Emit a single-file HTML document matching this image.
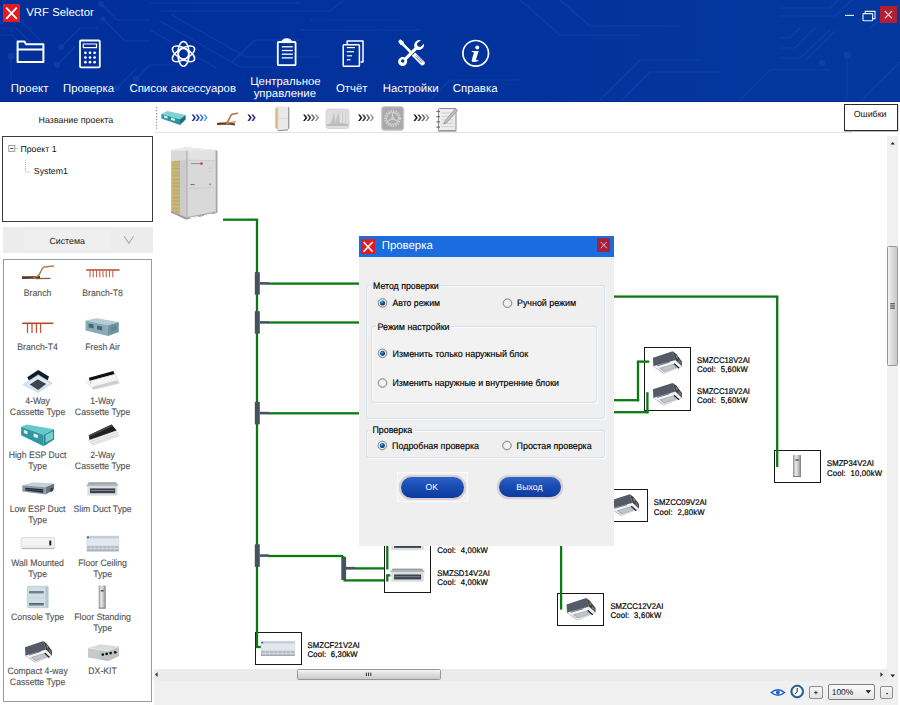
<!DOCTYPE html>
<html><head><meta charset="utf-8">
<style>
*{box-sizing:border-box;margin:0;padding:0}
html,body{width:900px;height:705px;overflow:hidden;background:#fff;font-family:"Liberation Sans",sans-serif;}
.a{position:absolute}
.t{position:absolute;white-space:nowrap;text-rendering:geometricPrecision;font-family:"Liberation Sans",sans-serif}
.g{position:absolute;background:#0b7a15}
.j{position:absolute;background:#47525f}
.bx{position:absolute;border:1px solid #1a1a1a;background:#fff}
.gb{position:absolute;border:1px solid #d8e1e8;border-radius:3px;box-shadow:inset 1px 1px 0 #fafafa,1px 1px 0 #fafafa}
svg{position:absolute;overflow:visible}
</style></head><body>
<div class="a" style="left:0;top:0;width:900px;height:102px;background:linear-gradient(90deg,#022f9a 0%,#02329c 45%,#04389f 100%);overflow:hidden">
<svg style="left:0;top:0" width="900" height="102" fill="none" stroke="#1a50bc" stroke-width="1.2" opacity="0.42">
<path d="M0 35 L12 35 L24 47 M0 22 L22 22 L44 44 M0 28 L16 28 L30 42 M61 47 L80 28 L98 28 M57 65 L76 46 M101 4 L117 20 L150 20 M103 19 L125 41 L150 41 M11 56 L11 80 M136 79 L150 65 L178 65 M117 88 L136 69"/>
<path d="M160 21 L240 67 L300 67 M172 15 L246 57 L320 57 M150 30 L216 68 M160 11 L330 11 L350 -5 M150 3 L300 3 M232 62 L255 40 L300 40 M300 30 L420 30 M310 20 L400 20"/>
<path d="M780 8 L830 8 L850 -10 M780 16 L835 16 L860 -8 M780 38 L790 38 L800 28 M780 48 L795 48 L815 28 M780 58 L800 58 L830 30 M806 60 L835 31"/>
<path d="M600 100 L640 60 L700 60 M620 102 L650 72 L720 72 M740 100 L770 70 L830 70 M847 55 L847 100 M870 28 L900 5 M860 102 L900 62"/>
<path d="M430 100 L450 80 L520 80 M520 0 L560 35 L640 35 M560 0 L590 26 L680 26"/>
<g stroke="none" fill="#1a50bc"><circle cx="61" cy="47" r="3"/><circle cx="57" cy="65" r="3"/><circle cx="11" cy="56" r="3.5"/><circle cx="101" cy="4" r="3"/><circle cx="103" cy="19" r="2.5"/><circle cx="136" cy="79" r="3"/><circle cx="117" cy="88" r="3"/><circle cx="847" cy="55" r="3.5"/><circle cx="822" cy="63" r="3"/></g>
</svg>
<div class="a" style="left:3px;top:4px;width:17px;height:18px;background:#e21b23"></div>
<svg style="left:3px;top:4px" width="17" height="18"><path d="M3.2 3.6 L13.8 14.8 M13.8 3.6 L3.2 14.8" stroke="#fff" stroke-width="1.9" fill="none"/></svg>
<div class="t" style="left:26.30px;top:7px;font-size:11.35px;line-height:12px;color:#fff;">VRF Selector</div>
<div class="t" style="left:10.83px;top:83px;font-size:11.40px;line-height:12px;color:#fff;">Проект</div>
<div class="t" style="left:62.97px;top:83px;font-size:11.40px;line-height:12px;color:#fff;">Проверка</div>
<div class="t" style="left:129.43px;top:83px;font-size:11.40px;line-height:12px;color:#fff;">Список аксессуаров</div>
<div class="t" style="left:250.13px;top:76px;font-size:11.40px;line-height:12px;color:#fff;">Центральное</div>
<div class="t" style="left:253.68px;top:88px;font-size:11.40px;line-height:12px;color:#fff;">управление</div>
<div class="t" style="left:335.91px;top:83px;font-size:11.40px;line-height:12px;color:#fff;">Отчёт</div>
<div class="t" style="left:382.70px;top:83px;font-size:11.40px;line-height:12px;color:#fff;">Настройки</div>
<div class="t" style="left:452.79px;top:83px;font-size:11.40px;line-height:12px;color:#fff;">Справка</div>
<svg style="left:0;top:0" width="900" height="102" fill="none" stroke="#fff" stroke-width="1.8" stroke-linejoin="round">
<path d="M17.6 62 L17.6 41.6 L24.5 41.6 L26 44.3 L43.4 44.3 L43.4 62 Z M17.6 49.6 L43.4 49.6" stroke-width="2"/>
<rect x="80" y="40.5" width="19.8" height="26.8" rx="1"/><rect x="83.3" y="44" width="13.2" height="3.6" stroke-width="1.2"/>
<circle cx="85.4" cy="52.8" r="1.35" fill="#fff" stroke="none"/>
<circle cx="85.4" cy="57.5" r="1.35" fill="#fff" stroke="none"/>
<circle cx="85.4" cy="62.2" r="1.35" fill="#fff" stroke="none"/>
<circle cx="90.0" cy="52.8" r="1.35" fill="#fff" stroke="none"/>
<circle cx="90.0" cy="57.5" r="1.35" fill="#fff" stroke="none"/>
<circle cx="90.0" cy="62.2" r="1.35" fill="#fff" stroke="none"/>
<circle cx="94.6" cy="52.8" r="1.35" fill="#fff" stroke="none"/>
<circle cx="94.6" cy="57.5" r="1.35" fill="#fff" stroke="none"/>
<circle cx="94.6" cy="62.2" r="1.35" fill="#fff" stroke="none"/>
<g transform="translate(183.5 53.8)" stroke-width="1.5"><ellipse rx="5.6" ry="12.4"/><ellipse rx="5.6" ry="12.4" transform="rotate(60)"/><ellipse rx="5.6" ry="12.4" transform="rotate(120)"/><circle r="5.2"/></g>
<rect x="277.8" y="42" width="17.8" height="23.2" rx="1"/><path d="M281.8 42.6 L281.8 41.2 C282.4 37.8 291 37.8 291.6 41.2 L291.6 42.6 Z" fill="#fff" stroke-width="0.8"/>
<path d="M281.8 46.8 L292.8 46.8" stroke-width="1.3"/>
<path d="M281.8 50.5 L292.8 50.5" stroke-width="1.3"/>
<path d="M281.8 54.2 L292.8 54.2" stroke-width="1.3"/>
<path d="M281.8 57.9 L292.8 57.9" stroke-width="1.3"/>
<path d="M347.2 44 L347.2 41 L363 41 L363 62 L360.5 62" stroke-width="1.5"/><rect x="343.2" y="44.8" width="16.2" height="21.4" rx="0.8" stroke-width="1.5"/>
<path d="M346.8 47.6 L355.0 47.6" stroke-width="1.2"/>
<path d="M346.8 51.7 L354.0 51.7" stroke-width="1.2"/>
<path d="M346.8 55.8 L352.0 55.8" stroke-width="1.2"/>
<path d="M346.8 59.8 L350.5 59.8" stroke-width="1.2"/>
<g stroke="none" fill="#fff">
<path d="M398.2 41.2 L400.2 39.2 L403.5 41.5 L404.2 43.8 L413 52.6 L411.2 54.4 L402.4 45.6 L400.2 44.8 Z"/>
<path d="M411.8 55.8 L415.2 52.4 L424.3 61.5 C426.2 63.4 423 66.8 421 64.9 Z"/>
<path d="M420.8 40.2 C417.6 39.6 414.6 41.8 414.2 45 C414.1 46 414.2 46.8 414.6 47.6 L404.6 57.4 C403.4 57 402 57 400.8 57.6 C398.2 58.8 397.4 62 399 64.2 C400.8 66.6 404.4 66.6 406.2 64.2 C407.2 62.8 407.4 61.2 406.8 59.8 L416.8 49.8 C419.6 50.8 422.8 49.4 423.8 46.6 C424.2 45.6 424.2 44.6 424 43.8 L420.6 47 L417.6 46.2 L416.8 43.4 Z"/>
</g>
<circle cx="402.7" cy="61" r="1.7" fill="#03349d" stroke="none"/>
<path d="M415.4 56.6 L421.6 62.8" stroke="#03349d" stroke-width="0.7"/>
<path d="M416.7 55.3 L422.9 61.5" stroke="#03349d" stroke-width="0.7"/>
<path d="M418.0 54.0 L424.2 60.2" stroke="#03349d" stroke-width="0.7"/>
<circle cx="475.7" cy="53.3" r="12.8" stroke-width="1.7"/>
</svg>
<svg style="left:0;top:0" width="900" height="102"><circle cx="477.3" cy="47.4" r="2" fill="#fff"/><path d="M471.9 50.9 L478.7 50.9 L476.1 59.3 Q475.8 60.5 477.2 60.2 L478.5 59.8 L478.2 61 Q475 62.4 472.6 61.9 Q471.3 61.4 471.8 59.7 L473.8 53 Q474 52.1 472.7 52.1 L471.6 52.1 Z" fill="#fff"/></svg>
<svg style="left:0;top:0" width="900" height="30" fill="none" stroke="#e8eefc" stroke-width="1.1"><path d="M845 15.4 L854 15.4"/><path d="M865.2 13.6 L865.2 11.4 L875 11.4 L875 18.6 L872.6 18.6"/><rect x="863" y="13.6" width="9.6" height="7.2" rx="0.8"/></svg>
<div class="a" style="left:880.3px;top:6px;width:16.4px;height:17.3px;background:#b01f33"></div>
<svg style="left:0;top:0" width="900" height="30"><path d="M884.8 11 L892 18.4 M892 11 L884.8 18.4" stroke="#f1d5da" stroke-width="1.1" fill="none"/></svg>
</div>
<div class="a" style="left:0;top:101px;width:900px;height:1.2px;background:#062a8c"></div>
<div class="a" style="left:155px;top:132px;width:697px;height:1px;background:#e3e3e3"></div>
<svg style="left:0;top:102px" width="900" height="34">
<rect x="156" y="5.2" width="1.2" height="1.2" fill="#8a8a8a"/>
<rect x="156" y="8.1" width="1.2" height="1.2" fill="#8a8a8a"/>
<rect x="156" y="11.0" width="1.2" height="1.2" fill="#8a8a8a"/>
<rect x="156" y="13.9" width="1.2" height="1.2" fill="#8a8a8a"/>
<rect x="156" y="16.8" width="1.2" height="1.2" fill="#8a8a8a"/>
<rect x="156" y="19.7" width="1.2" height="1.2" fill="#8a8a8a"/>
<rect x="156" y="22.6" width="1.2" height="1.2" fill="#8a8a8a"/>
<rect x="156" y="25.5" width="1.2" height="1.2" fill="#8a8a8a"/>
<g transform="translate(0 -102)"><path d="M161.4 114.0 L167.4 111.0 L185.6 115.0 L180.0 119.2 Z" fill="#7ed2d2" /><path d="M161.4 114.0 L180.0 119.2 L180.0 125.0 L161.4 118.6 Z" fill="#2c939c" /><path d="M180.0 119.2 L185.6 115.0 L185.6 119.6 L180.0 125.0 Z" fill="#1e6f7a" /><path d="M164.0 115.6 L167.6 116.6 L167.6 118.8 L164.0 117.8 Z" fill="#d6f0ee" /><path d="M171.0 117.6 L175.0 118.7 L175.0 121.0 L171.0 119.9 Z" fill="#d6f0ee" /></g>
<path d="M191.6 12.6 L193.5 12.6 L196.0 15.8 L193.5 19.0 L191.6 19.0 L194.1 15.8 Z" fill="#1b2a8c"/>
<path d="M195.5 12.6 L197.4 12.6 L199.9 15.8 L197.4 19.0 L195.5 19.0 L198.0 15.8 Z" fill="#1b3ea8"/>
<path d="M199.4 12.6 L201.3 12.6 L203.8 15.8 L201.3 19.0 L199.4 19.0 L201.9 15.8 Z" fill="#2f74c8"/>
<path d="M203.3 12.6 L205.2 12.6 L207.7 15.8 L205.2 19.0 L203.3 19.0 L205.8 15.8 Z" fill="#58a6e0"/>
<path d="M217.5 21.5 L226 21 C229 20.5 229.5 14 232 12.2 L238 11.2" fill="none" stroke="#b9703f" stroke-width="1.6"/><path d="M217 22 L229 21.6 L235 22.6" fill="none" stroke="#5a3a22" stroke-width="2"/><path d="M226 21.3 L236 19.6" fill="none" stroke="#c98a5a" stroke-width="1.2"/>
<path d="M247.4 12.6 L249.3 12.6 L251.8 15.8 L249.3 19.0 L247.4 19.0 L249.9 15.8 Z" fill="#1c1c6a"/>
<path d="M251.3 12.6 L253.2 12.6 L255.7 15.8 L253.2 19.0 L251.3 19.0 L253.8 15.8 Z" fill="#2a2a7a"/>
<path d="M275.4 5.4 L277.8 4.2 L288 4.8 L288 27.2 L277.8 28.2 L275.4 26.4 Z" fill="#e9e9e9"/><path d="M275.4 6.6 L277.6 5.8 L277.6 27 L275.4 25.6 Z" fill="#d8bd6c"/><path d="M277.8 4.4 L277.8 28.2" stroke="#c4c4c4" stroke-width="0.7"/><path d="M288 4.8 L289.4 5.4 L289.4 26.6 L288 27.2 Z" fill="#9d9d9d"/><path d="M278 16.6 L288 16.2" stroke="#cfcfcf" stroke-width="0.6"/><path d="M277.8 28.2 L288 27.2 L288 28.4 L277.8 29.2 Z" fill="#8f8f8f"/>
<path d="M303.0 12.6 L304.9 12.6 L307.4 15.8 L304.9 19.0 L303.0 19.0 L305.5 15.8 Z" fill="#1a1a1a"/>
<path d="M306.9 12.6 L308.8 12.6 L311.3 15.8 L308.8 19.0 L306.9 19.0 L309.4 15.8 Z" fill="#3a3a3a"/>
<path d="M310.8 12.6 L312.7 12.6 L315.2 15.8 L312.7 19.0 L310.8 19.0 L313.3 15.8 Z" fill="#6a6a6a"/>
<path d="M314.7 12.6 L316.6 12.6 L319.1 15.8 L316.6 19.0 L314.7 19.0 L317.2 15.8 Z" fill="#9a9a9a"/>
<rect x="326" y="7" width="23" height="19.5" rx="2.5" fill="#dedede" stroke="#cfcfcf" stroke-width="0.8"/><path d="M328.5 22.5 L331 21 L334 10 L335.5 20 L338.5 9.5 L340 21 L346.5 21.5 L346.5 22.5 Z" fill="#c2c2c2"/><path d="M342.5 9 L342.5 21 M345.6 9 L345.6 21" stroke="#cacaca" stroke-width="0.8"/><rect x="327" y="22.2" width="21" height="1.6" fill="#b4b4b4"/>
<path d="M358.0 12.6 L359.9 12.6 L362.4 15.8 L359.9 19.0 L358.0 19.0 L360.5 15.8 Z" fill="#1a1a1a"/>
<path d="M361.9 12.6 L363.8 12.6 L366.3 15.8 L363.8 19.0 L361.9 19.0 L364.4 15.8 Z" fill="#3a3a3a"/>
<path d="M365.8 12.6 L367.7 12.6 L370.2 15.8 L367.7 19.0 L365.8 19.0 L368.3 15.8 Z" fill="#6a6a6a"/>
<path d="M369.7 12.6 L371.6 12.6 L374.1 15.8 L371.6 19.0 L369.7 19.0 L372.2 15.8 Z" fill="#9a9a9a"/>
<rect x="381.6" y="4.6" width="22" height="23.6" rx="3" fill="#a9a9a9" stroke="#cdcdcd" stroke-width="1.4"/><circle cx="392.6" cy="16.4" r="7.4" fill="none" stroke="#d2d2d2" stroke-width="2.2" stroke-dasharray="1.4 1.1"/><circle cx="392.6" cy="16.4" r="6" fill="none" stroke="#cfcfcf" stroke-width="1.2"/><circle cx="392.6" cy="16.4" r="1.6" fill="#d5d5d5"/><path d="M392.6 16.4 L392.6 10.6 M392.6 16.4 L387.6 19.3 M392.6 16.4 L397.6 19.3" stroke="#d0d0d0" stroke-width="1.3"/>
<path d="M413.4 12.6 L415.3 12.6 L417.8 15.8 L415.3 19.0 L413.4 19.0 L415.9 15.8 Z" fill="#1a1a1a"/>
<path d="M417.3 12.6 L419.2 12.6 L421.7 15.8 L419.2 19.0 L417.3 19.0 L419.8 15.8 Z" fill="#3a3a3a"/>
<path d="M421.2 12.6 L423.1 12.6 L425.6 15.8 L423.1 19.0 L421.2 19.0 L423.7 15.8 Z" fill="#6a6a6a"/>
<path d="M425.1 12.6 L427.0 12.6 L429.5 15.8 L427.0 19.0 L425.1 19.0 L427.6 15.8 Z" fill="#9a9a9a"/>
<rect x="438.5" y="6.5" width="17.5" height="22" rx="1" fill="#ececec" stroke="#8d8d8d" stroke-width="1"/><path d="M437.8 29 L456.6 29" stroke="#9c9c9c" stroke-width="1.4"/>
<path d="M441.5 11.0 L453.6 11.0" stroke="#c4c4c4" stroke-width="0.7"/>
<path d="M441.5 14.4 L453.6 14.4" stroke="#c4c4c4" stroke-width="0.7"/>
<path d="M441.5 17.8 L453.6 17.8" stroke="#c4c4c4" stroke-width="0.7"/>
<path d="M441.5 21.2 L453.6 21.2" stroke="#c4c4c4" stroke-width="0.7"/>
<path d="M441.5 24.6 L453.6 24.6" stroke="#c4c4c4" stroke-width="0.7"/>
<path d="M436.4 9.5 L440 9.5" stroke="#6e6e6e" stroke-width="1.2"/>
<path d="M436.4 14.7 L440 14.7" stroke="#6e6e6e" stroke-width="1.2"/>
<path d="M436.4 19.9 L440 19.9" stroke="#6e6e6e" stroke-width="1.2"/>
<path d="M436.4 25.1 L440 25.1" stroke="#6e6e6e" stroke-width="1.2"/>
<path d="M444.6 19.4 L455.4 6.6 L457.6 8.2 L446.4 21 L443.8 22 Z" fill="#bdbdbd" stroke="#8a8a8a" stroke-width="0.6"/>
</svg>
<div class="a" style="left:844px;top:104px;width:54px;height:27px;border:1px solid #2a2a2a;background:#fff;box-shadow:0.5px 1px 0 #bbb"></div>
<div class="t" style="left:853.70px;top:109px;font-size:8.85px;line-height:10px;color:#111;">Ошибки</div>
<div class="t" style="left:38.60px;top:115px;font-size:8.90px;line-height:10px;color:#1a1a1a;">Название проекта</div>
<div class="a" style="left:2px;top:136px;width:150.5px;height:85.5px;border:1px solid #3c3c3c;background:#fff"></div>
<svg style="left:0;top:136px" width="160" height="90"><rect x="8.8" y="9.4" width="6" height="6" fill="#fff" stroke="#8a94a0" stroke-width="0.9"/><path d="M10.2 12.4 L13.4 12.4" stroke="#333" stroke-width="0.9"/><path d="M15.4 12.4 L18.6 12.4" stroke="#999" stroke-width="0.8" stroke-dasharray="1 1"/><path d="M25.4 24 L25.4 36 L31 36" fill="none" stroke="#9a9a9a" stroke-width="0.8" stroke-dasharray="1 1"/></svg>
<div class="t" style="left:20.40px;top:144px;font-size:8.75px;line-height:10px;color:#111;">Проект 1</div>
<div class="t" style="left:33.80px;top:166px;font-size:8.79px;line-height:10px;color:#111;">System1</div>
<div class="a" style="left:2.7px;top:226.6px;width:150.3px;height:26px;background:#ececec"></div>
<div class="a" style="left:24px;top:230px;width:86px;height:20px;background:#efefef"></div>
<div class="t" style="left:49.40px;top:236px;font-size:8.84px;line-height:10px;color:#1a1a1a;">Система</div>
<svg style="left:0;top:226px" width="160" height="30"><path d="M124.2 10.2 L128.9 17.2 L133.6 10.2" fill="none" stroke="#a9a9a9" stroke-width="1.1"/></svg>
<div class="a" style="left:3px;top:259px;width:149px;height:442.5px;border:1px solid #939ca7;background:#fff"></div>
<div class="t" style="left:23.82px;top:288px;font-size:8.70px;line-height:10px;color:#555;transform-origin:0 8px;transform:scale(1,1.070);-webkit-text-stroke:0.12px #555;">Branch</div>
<div class="t" style="left:82.29px;top:288px;font-size:8.70px;line-height:10px;color:#555;transform-origin:0 8px;transform:scale(1,1.070);-webkit-text-stroke:0.12px #555;">Branch-T8</div>
<div class="t" style="left:17.29px;top:342px;font-size:8.70px;line-height:10px;color:#555;transform-origin:0 8px;transform:scale(1,1.070);-webkit-text-stroke:0.12px #555;">Branch-T4</div>
<div class="t" style="left:85.20px;top:342px;font-size:8.70px;line-height:10px;color:#555;transform-origin:0 8px;transform:scale(1,1.070);-webkit-text-stroke:0.12px #555;">Fresh Air</div>
<div class="t" style="left:25.19px;top:396px;font-size:8.70px;line-height:10px;color:#555;transform-origin:0 8px;transform:scale(1,1.070);-webkit-text-stroke:0.12px #555;">4-Way</div>
<div class="t" style="left:9.87px;top:407px;font-size:8.70px;line-height:10px;color:#555;transform-origin:0 8px;transform:scale(1,1.070);-webkit-text-stroke:0.12px #555;">Cassette Type</div>
<div class="t" style="left:90.19px;top:396px;font-size:8.70px;line-height:10px;color:#555;transform-origin:0 8px;transform:scale(1,1.070);-webkit-text-stroke:0.12px #555;">1-Way</div>
<div class="t" style="left:74.87px;top:407px;font-size:8.70px;line-height:10px;color:#555;transform-origin:0 8px;transform:scale(1,1.070);-webkit-text-stroke:0.12px #555;">Cassette Type</div>
<div class="t" style="left:8.67px;top:450px;font-size:8.70px;line-height:10px;color:#555;transform-origin:0 8px;transform:scale(1,1.070);-webkit-text-stroke:0.12px #555;">High ESP Duct</div>
<div class="t" style="left:28.17px;top:461px;font-size:8.70px;line-height:10px;color:#555;transform-origin:0 8px;transform:scale(1,1.070);-webkit-text-stroke:0.12px #555;">Type</div>
<div class="t" style="left:90.19px;top:450px;font-size:8.70px;line-height:10px;color:#555;transform-origin:0 8px;transform:scale(1,1.070);-webkit-text-stroke:0.12px #555;">2-Way</div>
<div class="t" style="left:74.87px;top:461px;font-size:8.70px;line-height:10px;color:#555;transform-origin:0 8px;transform:scale(1,1.070);-webkit-text-stroke:0.12px #555;">Cassette Type</div>
<div class="t" style="left:9.63px;top:504px;font-size:8.70px;line-height:10px;color:#555;transform-origin:0 8px;transform:scale(1,1.070);-webkit-text-stroke:0.12px #555;">Low ESP Duct</div>
<div class="t" style="left:28.17px;top:515px;font-size:8.70px;line-height:10px;color:#555;transform-origin:0 8px;transform:scale(1,1.070);-webkit-text-stroke:0.12px #555;">Type</div>
<div class="t" style="left:73.43px;top:504px;font-size:8.70px;line-height:10px;color:#555;transform-origin:0 8px;transform:scale(1,1.070);-webkit-text-stroke:0.12px #555;">Slim Duct Type</div>
<div class="t" style="left:11.17px;top:558px;font-size:8.70px;line-height:10px;color:#555;transform-origin:0 8px;transform:scale(1,1.070);-webkit-text-stroke:0.12px #555;">Wall Mounted</div>
<div class="t" style="left:28.17px;top:569px;font-size:8.70px;line-height:10px;color:#555;transform-origin:0 8px;transform:scale(1,1.070);-webkit-text-stroke:0.12px #555;">Type</div>
<div class="t" style="left:78.18px;top:558px;font-size:8.70px;line-height:10px;color:#555;transform-origin:0 8px;transform:scale(1,1.070);-webkit-text-stroke:0.12px #555;">Floor Ceiling</div>
<div class="t" style="left:93.17px;top:569px;font-size:8.70px;line-height:10px;color:#555;transform-origin:0 8px;transform:scale(1,1.070);-webkit-text-stroke:0.12px #555;">Type</div>
<div class="t" style="left:11.08px;top:612px;font-size:8.70px;line-height:10px;color:#555;transform-origin:0 8px;transform:scale(1,1.070);-webkit-text-stroke:0.12px #555;">Console Type</div>
<div class="t" style="left:74.31px;top:612px;font-size:8.70px;line-height:10px;color:#555;transform-origin:0 8px;transform:scale(1,1.070);-webkit-text-stroke:0.12px #555;">Floor Standing</div>
<div class="t" style="left:93.17px;top:623px;font-size:8.70px;line-height:10px;color:#555;transform-origin:0 8px;transform:scale(1,1.070);-webkit-text-stroke:0.12px #555;">Type</div>
<div class="t" style="left:7.38px;top:666px;font-size:8.70px;line-height:10px;color:#555;transform-origin:0 8px;transform:scale(1,1.070);-webkit-text-stroke:0.12px #555;">Compact 4-way</div>
<div class="t" style="left:9.87px;top:677px;font-size:8.70px;line-height:10px;color:#555;transform-origin:0 8px;transform:scale(1,1.070);-webkit-text-stroke:0.12px #555;">Cassette Type</div>
<div class="t" style="left:88.34px;top:666px;font-size:8.70px;line-height:10px;color:#555;transform-origin:0 8px;transform:scale(1,1.070);-webkit-text-stroke:0.12px #555;">DX-KIT</div>
<svg style="left:0;top:0" width="160" height="705">
<path d="M22 277.6 L40 277.2" stroke="#4a3526" stroke-width="2.6" fill="none"/><path d="M33 277.2 L37 276.6 C41 275.4 40.5 268.4 44 267 L54 266" stroke="#b77a4f" stroke-width="1.5" fill="none"/><path d="M36 278.6 L50.5 278.4" stroke="#8a5a3a" stroke-width="1.4" fill="none"/><path d="M22 276.8 L33 276.6" stroke="#9a6b45" stroke-width="0.8"/>
<path d="M86.2 270 L119.5 270" stroke="#b5472f" stroke-width="1.4"/>
<path d="M90.0 270.8 L90.0 277.2" stroke="#c4664e" stroke-width="1.1"/>
<path d="M93.2 270.8 L93.2 277.2" stroke="#c4664e" stroke-width="1.1"/>
<path d="M96.5 270.8 L96.5 277.2" stroke="#c4664e" stroke-width="1.1"/>
<path d="M99.8 270.8 L99.8 277.2" stroke="#c4664e" stroke-width="1.1"/>
<path d="M103.0 270.8 L103.0 277.2" stroke="#c4664e" stroke-width="1.1"/>
<path d="M106.2 270.8 L106.2 277.2" stroke="#c4664e" stroke-width="1.1"/>
<path d="M109.5 270.8 L109.5 277.2" stroke="#c4664e" stroke-width="1.1"/>
<path d="M112.8 270.8 L112.8 277.2" stroke="#c4664e" stroke-width="1.1"/>
<path d="M22.2 323.3 L53.3 323.3" stroke="#b5472f" stroke-width="1.6"/>
<path d="M27.5 324 L27.5 333" stroke="#c25a42" stroke-width="1.3"/>
<path d="M32.0 324 L32.0 333" stroke="#c25a42" stroke-width="1.3"/>
<path d="M36.4 324 L36.4 333" stroke="#c25a42" stroke-width="1.3"/>
<path d="M40.6 324 L40.6 333" stroke="#c25a42" stroke-width="1.3"/>
<path d="M85.5 320.6 L96.5 318.3 L118.8 322.0 L108.0 325.2 Z" fill="#b2ccd3" />
<path d="M85.5 320.6 L108.0 325.2 L108.0 336.0 L85.5 330.6 Z" fill="#8babb6" />
<path d="M108.0 325.2 L118.8 322.0 L118.8 332.0 L108.0 336.0 Z" fill="#7196a2" />
<path d="M88.6 323.4 L93.6 324.5 L93.6 328.5 L88.6 327.4 Z" fill="#4a6672" />
<path d="M97.0 325.4 L102.2 326.5 L102.2 330.6 L97.0 329.5 Z" fill="#4a6672" />
<path d="M111.0 326.5 L116.5 324.8 L116.5 329.5 L111.0 331.3 Z" fill="#5f8793" />
<path d="M27.2 377.2 L38.2 370.0 L49.0 376.6 L47.8 380.0 L38.2 384.0 L28.7 380.0 Z" fill="#161b2a" />
<path d="M22.9 384.6 L38.2 374.8 L52.3 383.3 L38.2 392.5 Z" fill="#cfe3ee" stroke="#b2cbd8" stroke-width="0.5"/>
<path d="M26.4 384.4 L38.2 377.0 L49.4 383.4 L38.2 390.6 Z" fill="#e3eff5" />
<path d="M29.7 384.6 L37.8 379.2 L46.2 383.9 L38.2 390.1 Z" fill="#373d46" />
<path d="M32 384.7 L38 380.8 M34 386 L40.4 382 M36 387.4 L42.6 383.2 M38 388.7 L44.6 384.4" stroke="#59616c" stroke-width="0.6"/>
<path d="M89.0 377.8 L113.4 371.1 L114.6 374.2 L89.6 380.9 Z" fill="#0f1012" />
<path d="M86.5 382.1 L115.2 374.2 L119.5 383.3 L93.2 389.6 Z" fill="#f5f5f5" stroke="#d2d2d2" stroke-width="0.6"/>
<path d="M92.0 387.0 L117.1 380.3 L118.3 383.3 L93.2 389.2 Z" fill="#cdcdcd" />
<circle cx="90.6" cy="382.8" r="0.7" fill="#c89a40"/>
<path d="M21.1 426.7 L26.6 424.6 L54.1 429.2 L43.7 434.7 Z" fill="#66c8c8" />
<path d="M21.1 426.7 L43.7 434.7 L43.7 446.3 L21.1 435.3 Z" fill="#2d98a0" />
<path d="M43.7 434.7 L54.1 429.2 L54.1 439.6 L43.7 446.3 Z" fill="#2a8b95" />
<path d="M45.6 435.0 L53.0 431.2 L53.0 438.8 L45.6 442.8 Z" fill="#78cdd0" />
<path d="M23.6 429.6 L27.8 431.1 L27.8 434.8 L23.6 433.3 Z" fill="#e4f3f0" stroke="#1f7580" stroke-width="0.4"/>
<path d="M33.3 433.0 L38.2 434.7 L38.2 438.6 L33.3 436.9 Z" fill="#e4f3f0" stroke="#1f7580" stroke-width="0.4"/>
<path d="M88.7 435.3 L111.6 424.6 L116.7 430.4 L89.6 440.8 Z" fill="#202023" />
<path d="M88.7 435.3 L111.6 424.6 L112.8 426.0 L89.4 437.0 Z" fill="#47474b" />
<path d="M88.3 440.4 L116.7 430.8 L118.9 435.9 L93.2 445.3 Z" fill="#f1f1f1" stroke="#c9c9c9" stroke-width="0.5"/>
<path d="M90.4 441.8 L117.6 432.6 M92 443.6 L118.4 434.6" stroke="#bdbdbd" stroke-width="0.5"/>
<path d="M22.3 485.3 L33.3 482.3 L54.1 483.5 L45.6 487.2 Z" fill="#c8cfd6" />
<path d="M22.3 485.3 L45.6 487.2 L45.6 494.5 L22.3 491.4 Z" fill="#8b99a6" />
<path d="M45.6 487.2 L54.1 483.5 L54.1 489.6 L45.6 494.5 Z" fill="#6a7580" />
<path d="M25.4 487.8 L43.1 489.2 L43.1 492.7 L25.4 490.6 Z" fill="#1f2a38" />
<path d="M26.0 489.0 L42.6 490.4 L42.6 491.2 L26.0 489.8 Z" fill="#4e6278" />
<path d="M50.4 488.6 L52.8 487.6 L52.8 491.0 L50.4 492.2 Z" fill="#2c3540" />
<path d="M88.7 482.6 L116.2 482.6 L118.8 486.0 L86.2 486.0 Z" fill="#b4b7b8" /><path d="M88.7 482.6 L116.2 482.6 L116.8 483.6 L88.0 483.6 Z" fill="#8f9394" /><path d="M87.4 486.0 L117.6 486.0 L117.6 495.6 L87.4 495.6 Z" fill="#dcdedf" /><path d="M90.0 488.4 L115.2 488.4 L115.2 493.2 L90.0 493.2 Z" fill="#3a434e" /><path d="M90.8 490.0 L114.4 490.0 L114.4 491.0 L90.8 491.0 Z" fill="#7d8894" />
<rect x="21.2" y="537.6" width="33.4" height="11.2" rx="1.6" fill="#f3f3f3" stroke="#cfcfcf" stroke-width="0.7"/><path d="M22 548.4 L54 548.4" stroke="#b5b5b5" stroke-width="1"/><rect x="49.3" y="540.6" width="2" height="4.8" fill="#1c1c1c"/><path d="M22 546.4 L54 546.4" stroke="#dedede" stroke-width="0.6"/>
<path d="M86.8 536.0 L118.8 536.0 L118.8 546.0 L86.8 546.0 Z" fill="#e3e8ef" stroke="#c9d0da" stroke-width="0.5"/><path d="M86.8 536.0 L118.8 536.0 L118.8 538.4 L86.8 538.4 Z" fill="#c3cedc" /><path d="M87.1 536.6 L88.8 536.6 L88.8 538.2 L87.1 538.2 Z" fill="#3d5a8a" /><path d="M86.8 546.0 L118.8 546.0 L118.8 551.3 L86.8 551.3 Z" fill="#b4bcc8" /><path d="M90.8 546.4 L90.8 550.8" stroke="#dfe4ea" stroke-width="0.7"/><path d="M94.8 546.4 L94.8 550.8" stroke="#dfe4ea" stroke-width="0.7"/><path d="M98.8 546.4 L98.8 550.8" stroke="#dfe4ea" stroke-width="0.7"/><path d="M102.8 546.4 L102.8 550.8" stroke="#dfe4ea" stroke-width="0.7"/><path d="M106.8 546.4 L106.8 550.8" stroke="#dfe4ea" stroke-width="0.7"/><path d="M110.8 546.4 L110.8 550.8" stroke="#dfe4ea" stroke-width="0.7"/><path d="M114.8 546.4 L114.8 550.8" stroke="#dfe4ea" stroke-width="0.7"/><path d="M87.4 548.3 L118.2 548.3 L118.2 549.0 L87.4 549.0 Z" fill="#d6dbe2" /><path d="M86.8 550.6 L118.8 550.6 L118.8 551.3 L86.8 551.3 Z" fill="#98a2ae" />
<rect x="27.4" y="586.3" width="20.8" height="21.4" rx="0.8" fill="#cfdfe4" stroke="#adc1c8" stroke-width="0.7"/><rect x="45.4" y="586.6" width="2.6" height="20.8" fill="#b4c7ce"/><rect x="29" y="591.4" width="14.8" height="1.2" fill="#34444c"/><rect x="29" y="593.2" width="14.8" height="0.7" fill="#93a8b0"/><rect x="29" y="603.2" width="14.8" height="1.4" fill="#34444c"/><rect x="29" y="605.2" width="14.8" height="0.8" fill="#7d949c"/><path d="M29 598 L44 598" stroke="#bacdd3" stroke-width="0.6"/>
<defs><linearGradient id="fs0" x1="0" x2="1" y1="0" y2="0"><stop offset="0" stop-color="#8f8f8f"/><stop offset="0.35" stop-color="#ececec"/><stop offset="0.7" stop-color="#bdbdbd"/><stop offset="1" stop-color="#7d7d7d"/></linearGradient></defs><rect x="98.7" y="585.6" width="7.0" height="23.0" rx="0.6" fill="url(#fs0)"/><rect x="100.8" y="590.2" width="2.8" height="1.2" fill="#2b3340"/><rect x="98.7" y="607.6" width="7.0" height="1" fill="#7a7a7a"/>
<path d="M25.0 655.4 L46.0 649.5 L52.0 655.4 L35.0 662.6 Z" fill="#f3f5f7" stroke="#b9bec7" stroke-width="0.7"/><path d="M25.0 647.3 L43.4 641.1 L46.0 649.5 L25.4 655.4 Z" fill="#555a67" /><path d="M43.4 641.1 L46.8 643.7 L52.0 650.8 L52.0 655.4 L46.0 649.5 Z" fill="#3b404b" /><path d="M46.2 644.3 L48.0 646.0 L48.2 648.7 L46.5 647.2 Z" fill="#9a7840" /><path d="M48.8 648.5 L51.2 651.4 L51.2 653.7 L48.8 651.0 Z" fill="#6d7586" /><path d="M30.7 657.2 L44.2 653.1 L47.6 656.7 L35.4 661.2 Z" fill="#adb0b6" /><path d="M32.9 657.5 L43.7 654.3 L45.8 656.5 L36.1 660.1 Z" fill="#c3c5ca" /><path d="M44.8 653.0 L49.4 657.5" stroke="#1d1f24" stroke-width="1.21"/><path d="M28.9 655.2 L40.6 651.5" stroke="#2a2d33" stroke-width="0.56"/><path d="M29.4 657.6 L34.2 661.6" stroke="#9aa0a8" stroke-width="0.47"/>
<path d="M88.0 648.0 L100.5 644.3 L118.8 646.6 L108.0 651.0 Z" fill="#d9dbdb" />
<path d="M88.0 648.0 L108.0 651.0 L108.0 660.9 L88.0 657.4 Z" fill="#c6c9c9" />
<path d="M108.0 651.0 L118.8 646.6 L118.8 656.0 L108.0 660.9 Z" fill="#b2b5b5" />
<path d="M100.0 650.4 L108.0 651.4 L118.8 647.0 L118.8 656.0 L108.0 660.9 L100.0 659.6 Z" fill="#bfc2c2" />
<circle cx="102.8" cy="654.6" r="1.35" fill="#15171a"/>
<circle cx="106.7" cy="653.9" r="1.35" fill="#15171a"/>
<circle cx="110.6" cy="653.1" r="1.35" fill="#15171a"/>
<circle cx="115.2" cy="652.3" r="1.35" fill="#15171a"/>
<path d="M88 648 L108 651 L118.8 646.6" fill="none" stroke="#f0f0f0" stroke-width="0.6"/>
</svg>
<div class="a" style="left:887.3px;top:136px;width:10.7px;height:545px;background:#f0f0f0"></div>
<div class="a" style="left:153.5px;top:669px;width:734px;height:11.5px;background:#ebebeb"></div>
<div class="a" style="left:153.5px;top:680.5px;width:746.5px;height:24.5px;background:#f0f0f0"></div>
<div class="a" style="left:898px;top:680.5px;width:2px;height:24.5px;background:#fff"></div>
<div class="a" style="left:887px;top:246px;width:11px;height:119.5px;border:1px solid #979797;border-radius:1.5px;background:linear-gradient(90deg,#f2f2f2 0%,#dcdcdc 45%,#c9c9c9 100%)"></div>
<svg style="left:0;top:0" width="900" height="705"><path d="M890.2 303.8 L894.8 303.8 M890.2 306 L894.8 306 M890.2 308.2 L894.8 308.2" stroke="#333" stroke-width="1"/>
<path d="M890.6 144.4 L892.7 142 L894.8 144.4 Z" fill="#222"/><path d="M890.4 674.6 L895 674.6 L892.7 677.2 Z" fill="#222"/>
<path d="M880.4 672.2 L883 674.6 L880.4 677 Z" fill="#333"/><path d="M157.6 672.2 L155 674.6 L157.6 677 Z" fill="#333"/></svg>
<div class="a" style="left:297.4px;top:669.4px;width:143.5px;height:10.4px;border:1px solid #979797;border-radius:1.5px;background:linear-gradient(180deg,#f4f4f4 0%,#dddddd 50%,#cbcbcb 100%)"></div>
<svg style="left:0;top:0" width="900" height="705"><path d="M366.4 672.6 L366.4 676 M368.6 672.6 L368.6 676 M370.8 672.6 L370.8 676" stroke="#333" stroke-width="1"/></svg>
<svg style="left:0;top:0" width="900" height="705">
<defs><pattern id="coil" x="171.6" y="161" width="2.1" height="3.6" patternUnits="userSpaceOnUse"><rect width="2.1" height="3.6" fill="#d3b760"/><rect x="0" y="0" width="2.1" height="0.8" fill="#a9a48c"/><rect x="0" y="0" width="0.55" height="3.6" fill="#b5ad8c"/></pattern></defs>
<path d="M171.0 150.4 L186.0 147.2 L186.0 219.4 L171.0 212.4 Z" fill="#cbcbcb" />
<path d="M171.0 150.4 L186.0 147.2 L186.0 160.0 L171.0 161.4 Z" fill="#d9d9d9" />
<path d="M171.6 161.4 L180.0 160.6 L180.0 214.6 L171.6 210.8 Z" fill="url(#coil)" />
<path d="M186.0 147.2 L215.6 150.0 L215.6 213.6 L186.0 219.4 Z" fill="#d9d9d9" />
<path d="M186.0 147.2 L215.6 150.0 L215.6 160.6 L186.0 160.0 Z" fill="#e2e2e2" />
<path d="M215.6 150.0 L217.5 150.8 L217.5 212.6 L215.6 213.6 Z" fill="#a6a6a6" />
<path d="M186.0 147.2 L187.8 147.4 L187.8 219.0 L186.0 219.4 Z" fill="#bdbdbd" />
<path d="M171.0 150.4 L186.0 147.2 L215.6 150.0 L203.0 150.8 Z" fill="#ebebeb" />
<path d="M187.8 160.2 L215.6 160.8 M187.8 188.6 L215.6 187.4" stroke="#c6c6c6" stroke-width="0.7"/>
<path d="M191 163.6 L200.8 163.6" stroke="#9a8a8a" stroke-width="1"/><rect x="200.4" y="162.5" width="2.2" height="2.2" fill="#d8262c"/>
<path d="M190.5 184.6 L194.5 184.6" stroke="#6a6a6a" stroke-width="1"/><rect x="209.4" y="183.6" width="1.6" height="1.6" fill="#8a8a8a"/><rect x="209" y="167.5" width="2" height="1" fill="#bcd0d0"/><rect x="209" y="171" width="2" height="1" fill="#bcd0d0"/>
<path d="M171.0 210.8 L186.0 217.4 L186.0 219.4 L171.0 212.6 Z" fill="#9a9a9a" />
<path d="M186.0 217.2 L215.6 211.6 L215.6 213.6 L186.0 219.4 Z" fill="#a8a8a8" />
<path d="M190.0 217.6 L198.0 216.1 L198.0 217.3 L190.0 218.8 Z" fill="#fff" />
<path d="M204.0 215.0 L212.0 213.5 L212.0 214.7 L204.0 216.2 Z" fill="#fff" />
</svg>
<svg style="left:0;top:0" width="900" height="705"><rect x="223.00" y="218.55" width="35.15" height="2.30" fill="#0b7a15"/><rect x="255.85" y="219.70" width="2.30" height="428.30" fill="#0b7a15"/><rect x="255.85" y="645.85" width="5.65" height="2.30" fill="#0b7a15"/><rect x="268.00" y="282.45" width="332.00" height="2.30" fill="#0b7a15"/><rect x="268.00" y="321.35" width="132.00" height="2.30" fill="#0b7a15"/><rect x="268.00" y="412.15" width="132.00" height="2.30" fill="#0b7a15"/><rect x="254.80" y="272.15" width="5.00" height="22.50" fill="#47525f"/><rect x="259.80" y="282.10" width="9.00" height="2.60" fill="#47525f"/><rect x="254.80" y="311.15" width="5.00" height="22.50" fill="#47525f"/><rect x="259.80" y="321.10" width="9.00" height="2.60" fill="#47525f"/><rect x="254.80" y="401.85" width="5.00" height="22.50" fill="#47525f"/><rect x="259.80" y="411.80" width="9.00" height="2.60" fill="#47525f"/><rect x="254.80" y="544.35" width="5.00" height="22.50" fill="#47525f"/><rect x="259.80" y="554.30" width="9.00" height="2.60" fill="#47525f"/><rect x="600.00" y="295.45" width="178.40" height="2.30" fill="#0b7a15"/><rect x="776.05" y="296.60" width="2.30" height="170.40" fill="#0b7a15"/><rect x="600.00" y="399.05" width="39.20" height="2.30" fill="#0b7a15"/><rect x="636.85" y="361.00" width="2.30" height="40.30" fill="#0b7a15"/><rect x="636.90" y="360.45" width="12.30" height="2.30" fill="#0b7a15"/><rect x="600.00" y="411.05" width="48.50" height="2.30" fill="#0b7a15"/><rect x="646.25" y="392.20" width="2.30" height="21.10" fill="#0b7a15"/><rect x="268.00" y="554.85" width="75.00" height="2.30" fill="#0b7a15"/><rect x="341.30" y="557.00" width="4.80" height="23.00" fill="#47525f"/><rect x="346.00" y="566.90" width="9.00" height="2.70" fill="#47525f"/><rect x="342.00" y="556.05" width="2.50" height="2.30" fill="#0b7a15"/><rect x="354.80" y="567.25" width="33.60" height="2.30" fill="#0b7a15"/><rect x="386.15" y="530.00" width="2.30" height="39.50" fill="#0b7a15"/><rect x="343.50" y="579.25" width="44.90" height="2.30" fill="#0b7a15"/><rect x="386.15" y="574.60" width="2.30" height="6.90" fill="#0b7a15"/><rect x="386.20" y="574.25" width="4.20" height="2.30" fill="#0b7a15"/><rect x="559.95" y="520.00" width="2.30" height="89.60" fill="#0b7a15"/></svg>
<div class="bx" style="left:254.5px;top:632.4px;width:47.5px;height:32.2px"></div>
<div class="bx" style="left:384.2px;top:520.0px;width:47.2px;height:72.6px"></div>
<div class="bx" style="left:557.4px;top:593.2px;width:47.0px;height:32.6px"></div>
<div class="bx" style="left:601.0px;top:489.3px;width:47.0px;height:32.3px"></div>
<div class="bx" style="left:644.4px;top:346.6px;width:46.8px;height:64.2px"></div>
<div class="bx" style="left:774.0px;top:450.0px;width:47.2px;height:32.6px"></div>
<svg style="left:0;top:0" width="900" height="705"><rect x="255.85" y="645.85" width="5.65" height="2.30" fill="#0b7a15"/><rect x="255.85" y="632.00" width="2.30" height="16.00" fill="#0b7a15"/><rect x="386.20" y="574.25" width="4.20" height="2.30" fill="#0b7a15"/><rect x="386.15" y="530.00" width="2.30" height="39.50" fill="#0b7a15"/><rect x="386.15" y="574.60" width="2.30" height="6.90" fill="#0b7a15"/><rect x="559.95" y="593.00" width="2.30" height="16.60" fill="#0b7a15"/><rect x="644.00" y="360.45" width="5.20" height="2.30" fill="#0b7a15"/><rect x="646.25" y="392.20" width="2.30" height="18.80" fill="#0b7a15"/><rect x="776.05" y="450.00" width="2.30" height="17.00" fill="#0b7a15"/></svg>
<svg style="left:0;top:0" width="900" height="705">
<path d="M261.0 641.3 L294.8 641.3 L294.8 650.8 L261.0 650.8 Z" fill="#e3e8ef" stroke="#c9d0da" stroke-width="0.5"/><path d="M261.0 641.3 L294.8 641.3 L294.8 643.6 L261.0 643.6 Z" fill="#c3cedc" /><path d="M261.3 641.9 L263.1 641.9 L263.1 643.4 L261.3 643.4 Z" fill="#3d5a8a" /><path d="M261.0 650.8 L294.8 650.8 L294.8 655.9 L261.0 655.9 Z" fill="#b4bcc8" /><path d="M265.2 651.2 L265.2 655.4" stroke="#dfe4ea" stroke-width="0.7"/><path d="M269.4 651.2 L269.4 655.4" stroke="#dfe4ea" stroke-width="0.7"/><path d="M273.7 651.2 L273.7 655.4" stroke="#dfe4ea" stroke-width="0.7"/><path d="M277.9 651.2 L277.9 655.4" stroke="#dfe4ea" stroke-width="0.7"/><path d="M282.1 651.2 L282.1 655.4" stroke="#dfe4ea" stroke-width="0.7"/><path d="M286.4 651.2 L286.4 655.4" stroke="#dfe4ea" stroke-width="0.7"/><path d="M290.6 651.2 L290.6 655.4" stroke="#dfe4ea" stroke-width="0.7"/><path d="M261.6 653.0 L294.2 653.0 L294.2 653.7 L261.6 653.7 Z" fill="#d6dbe2" /><path d="M261.0 655.2 L294.8 655.2 L294.8 655.9 L261.0 655.9 Z" fill="#98a2ae" />
<path d="M392.7 568.7 L422.2 568.7 L425.0 572.1 L390.0 572.1 Z" fill="#b4b7b8" /><path d="M392.7 568.7 L422.2 568.7 L422.9 569.7 L391.9 569.7 Z" fill="#8f9394" /><path d="M391.3 572.1 L423.7 572.1 L423.7 581.8 L391.3 581.8 Z" fill="#dcdedf" /><path d="M394.1 574.5 L421.1 574.5 L421.1 579.4 L394.1 579.4 Z" fill="#3a434e" /><path d="M394.9 576.2 L420.3 576.2 L420.3 577.2 L394.9 577.2 Z" fill="#7d8894" />
<path d="M392.7 537.2 L422.2 537.2 L425.0 540.6 L390.0 540.6 Z" fill="#b4b7b8" /><path d="M392.7 537.2 L422.2 537.2 L422.9 538.2 L391.9 538.2 Z" fill="#8f9394" /><path d="M391.3 540.6 L423.7 540.6 L423.7 550.3 L391.3 550.3 Z" fill="#dcdedf" /><path d="M394.1 543.0 L421.1 543.0 L421.1 547.9 L394.1 547.9 Z" fill="#3a434e" /><path d="M394.9 544.7 L420.3 544.7 L420.3 545.7 L394.9 545.7 Z" fill="#7d8894" />
<path d="M566.5 612.6 L589.0 606.6 L595.5 612.6 L577.3 620.0 Z" fill="#f3f5f7" stroke="#b9bec7" stroke-width="0.7"/><path d="M566.5 604.4 L586.2 598.1 L589.0 606.6 L567.0 612.6 Z" fill="#555a67" /><path d="M586.2 598.1 L589.9 600.7 L595.5 608.0 L595.5 612.6 L589.0 606.6 Z" fill="#3b404b" /><path d="M589.2 601.3 L591.2 603.1 L591.4 605.9 L589.6 604.3 Z" fill="#9a7840" /><path d="M592.0 605.7 L594.6 608.6 L594.6 611.0 L592.0 608.2 Z" fill="#6d7586" /><path d="M572.6 614.5 L587.1 610.4 L590.8 614.0 L577.7 618.6 Z" fill="#adb0b6" /><path d="M575.0 614.8 L586.6 611.6 L588.8 613.8 L578.4 617.4 Z" fill="#c3c5ca" /><path d="M587.7 610.2 L592.7 614.8" stroke="#1d1f24" stroke-width="1.30"/><path d="M570.7 612.4 L583.3 608.7" stroke="#2a2d33" stroke-width="0.60"/><path d="M571.2 614.9 L576.4 619.0" stroke="#9aa0a8" stroke-width="0.50"/>
<path d="M610.5 508.6 L632.6 502.7 L639.0 508.6 L621.1 515.8 Z" fill="#f3f5f7" stroke="#b9bec7" stroke-width="0.7"/><path d="M610.5 500.5 L629.9 494.3 L632.6 502.7 L611.0 508.6 Z" fill="#555a67" /><path d="M629.9 494.3 L633.5 496.9 L639.0 504.0 L639.0 508.6 L632.6 502.7 Z" fill="#3b404b" /><path d="M632.8 497.5 L634.8 499.2 L635.0 501.9 L633.2 500.4 Z" fill="#9a7840" /><path d="M635.6 501.7 L638.1 504.6 L638.1 506.9 L635.6 504.2 Z" fill="#6d7586" /><path d="M616.5 510.4 L630.7 506.3 L634.4 509.9 L621.5 514.4 Z" fill="#adb0b6" /><path d="M618.9 510.7 L630.3 507.5 L632.4 509.7 L622.2 513.3 Z" fill="#c3c5ca" /><path d="M631.3 506.2 L636.3 510.7" stroke="#1d1f24" stroke-width="1.28"/><path d="M614.6 508.4 L627.0 504.7" stroke="#2a2d33" stroke-width="0.59"/><path d="M615.1 510.8 L620.2 514.8" stroke="#9aa0a8" stroke-width="0.49"/>
<path d="M652.9 366.1 L675.4 360.0 L681.9 366.1 L663.7 373.6 Z" fill="#f3f5f7" stroke="#b9bec7" stroke-width="0.7"/><path d="M652.9 357.7 L672.6 351.3 L675.4 360.0 L653.4 366.1 Z" fill="#555a67" /><path d="M672.6 351.3 L676.3 354.0 L681.9 361.4 L681.9 366.1 L675.4 360.0 Z" fill="#3b404b" /><path d="M675.6 354.6 L677.6 356.4 L677.8 359.2 L676.0 357.6 Z" fill="#9a7840" /><path d="M678.4 359.0 L681.0 362.0 L681.0 364.4 L678.4 361.6 Z" fill="#6d7586" /><path d="M659.0 368.0 L673.5 363.8 L677.2 367.5 L664.1 372.2 Z" fill="#adb0b6" /><path d="M661.4 368.3 L673.0 365.0 L675.2 367.3 L664.8 371.0 Z" fill="#c3c5ca" /><path d="M674.1 363.6 L679.1 368.3" stroke="#1d1f24" stroke-width="1.30"/><path d="M657.1 365.9 L669.7 362.1" stroke="#2a2d33" stroke-width="0.60"/><path d="M657.6 368.4 L662.8 372.6" stroke="#9aa0a8" stroke-width="0.50"/>
<path d="M652.9 397.7 L675.4 391.6 L681.9 397.7 L663.7 405.2 Z" fill="#f3f5f7" stroke="#b9bec7" stroke-width="0.7"/><path d="M652.9 389.3 L672.6 382.9 L675.4 391.6 L653.4 397.7 Z" fill="#555a67" /><path d="M672.6 382.9 L676.3 385.6 L681.9 393.0 L681.9 397.7 L675.4 391.6 Z" fill="#3b404b" /><path d="M675.6 386.2 L677.6 388.0 L677.8 390.8 L676.0 389.2 Z" fill="#9a7840" /><path d="M678.4 390.6 L681.0 393.6 L681.0 396.0 L678.4 393.2 Z" fill="#6d7586" /><path d="M659.0 399.6 L673.5 395.4 L677.2 399.1 L664.1 403.8 Z" fill="#adb0b6" /><path d="M661.4 399.9 L673.0 396.6 L675.2 398.9 L664.8 402.6 Z" fill="#c3c5ca" /><path d="M674.1 395.2 L679.1 399.9" stroke="#1d1f24" stroke-width="1.30"/><path d="M657.1 397.5 L669.7 393.7" stroke="#2a2d33" stroke-width="0.60"/><path d="M657.6 400.0 L662.8 404.2" stroke="#9aa0a8" stroke-width="0.50"/>
<defs><linearGradient id="fs1" x1="0" x2="1" y1="0" y2="0"><stop offset="0" stop-color="#8f8f8f"/><stop offset="0.35" stop-color="#ececec"/><stop offset="0.7" stop-color="#bdbdbd"/><stop offset="1" stop-color="#7d7d7d"/></linearGradient></defs><rect x="793.0" y="455.0" width="8.0" height="22.0" rx="0.6" fill="url(#fs1)"/><rect x="795.4" y="459.4" width="3.2" height="1.2" fill="#2b3340"/><rect x="793.0" y="476.0" width="8.0" height="1" fill="#7a7a7a"/>
</svg>
<div class="t" style="left:307.60px;top:641px;font-size:7.75px;line-height:9px;color:#000;transform-origin:0 7px;transform:scale(1,1.070);-webkit-text-stroke:0.2px #000;">SMZCF21V2AI</div>
<div class="t" style="left:307.60px;top:650px;font-size:7.75px;line-height:9px;color:#000;transform-origin:0 7px;transform:scale(1,1.070);-webkit-text-stroke:0.2px #000;letter-spacing:0.113px;">Cool:&nbsp; 6,30kW</div>
<div class="t" style="left:437.30px;top:569px;font-size:7.75px;line-height:9px;color:#000;transform-origin:0 7px;transform:scale(1,1.070);-webkit-text-stroke:0.2px #000;">SMZSD14V2AI</div>
<div class="t" style="left:437.30px;top:578px;font-size:7.75px;line-height:9px;color:#000;transform-origin:0 7px;transform:scale(1,1.070);-webkit-text-stroke:0.2px #000;letter-spacing:0.148px;">Cool:&nbsp; 4,00kW</div>
<div class="t" style="left:437.30px;top:537px;font-size:7.75px;line-height:9px;color:#000;transform-origin:0 7px;transform:scale(1,1.070);-webkit-text-stroke:0.2px #000;">SMZSD14V2AI</div>
<div class="t" style="left:437.30px;top:546px;font-size:7.75px;line-height:9px;color:#000;transform-origin:0 7px;transform:scale(1,1.070);-webkit-text-stroke:0.2px #000;letter-spacing:0.148px;">Cool:&nbsp; 4,00kW</div>
<div class="t" style="left:610.40px;top:602px;font-size:7.75px;line-height:9px;color:#000;transform-origin:0 7px;transform:scale(1,1.070);-webkit-text-stroke:0.2px #000;">SMZCC12V2AI</div>
<div class="t" style="left:610.40px;top:611px;font-size:7.75px;line-height:9px;color:#000;transform-origin:0 7px;transform:scale(1,1.070);-webkit-text-stroke:0.2px #000;letter-spacing:0.182px;">Cool:&nbsp; 3,60kW</div>
<div class="t" style="left:653.80px;top:498px;font-size:7.75px;line-height:9px;color:#000;transform-origin:0 7px;transform:scale(1,1.070);-webkit-text-stroke:0.2px #000;">SMZCC09V2AI</div>
<div class="t" style="left:653.80px;top:508px;font-size:7.75px;line-height:9px;color:#000;transform-origin:0 7px;transform:scale(1,1.070);-webkit-text-stroke:0.2px #000;letter-spacing:0.182px;">Cool:&nbsp; 2,80kW</div>
<div class="t" style="left:697.00px;top:356px;font-size:7.75px;line-height:9px;color:#000;transform-origin:0 7px;transform:scale(1,1.070);-webkit-text-stroke:0.2px #000;">SMZCC18V2AI</div>
<div class="t" style="left:697.00px;top:365px;font-size:7.75px;line-height:9px;color:#000;transform-origin:0 7px;transform:scale(1,1.070);-webkit-text-stroke:0.2px #000;letter-spacing:0.182px;">Cool:&nbsp; 5,60kW</div>
<div class="t" style="left:697.00px;top:387px;font-size:7.75px;line-height:9px;color:#000;transform-origin:0 7px;transform:scale(1,1.070);-webkit-text-stroke:0.2px #000;">SMZCC18V2AI</div>
<div class="t" style="left:697.00px;top:396px;font-size:7.75px;line-height:9px;color:#000;transform-origin:0 7px;transform:scale(1,1.070);-webkit-text-stroke:0.2px #000;letter-spacing:0.182px;">Cool:&nbsp; 5,60kW</div>
<div class="t" style="left:827.00px;top:459px;font-size:7.75px;line-height:9px;color:#000;transform-origin:0 7px;transform:scale(1,1.070);-webkit-text-stroke:0.2px #000;">SMZP34V2AI</div>
<div class="t" style="left:827.00px;top:469px;font-size:7.75px;line-height:9px;color:#000;transform-origin:0 7px;transform:scale(1,1.070);-webkit-text-stroke:0.2px #000;letter-spacing:0.164px;">Cool:&nbsp; 10,00kW</div>
<svg style="left:0;top:0" width="900" height="705">
<path d="M771.3 692.5 Q777.9 687 784.5 692.5 Q777.9 698 771.3 692.5 Z" fill="#fff" stroke="#1a5fd2" stroke-width="1.5"/><circle cx="777.9" cy="692.5" r="1.9" fill="#1a5fd2"/>
<circle cx="797.2" cy="691.5" r="5.6" fill="#fff" stroke="#1d6fb0" stroke-width="1.8"/><circle cx="797.2" cy="691.5" r="6.4" fill="none" stroke="#1a2a4a" stroke-width="0.6"/><path d="M797.2 688 L797.2 691.8 L795 694" fill="none" stroke="#111" stroke-width="0.9"/>
</svg>
<div class="a" style="left:809.2px;top:685.8px;width:13.6px;height:13px;border:1px solid #8f8f8f;border-radius:2px;background:linear-gradient(#f6f6f6,#e2e2e2)"></div>
<div class="a" style="left:880px;top:685.6px;width:13.4px;height:13.2px;border:1px solid #8f8f8f;border-radius:2px;background:linear-gradient(#f6f6f6,#e2e2e2)"></div>
<div class="a" style="left:828.3px;top:683.7px;width:46.4px;height:16px;border:1px solid #7d7d7d;border-radius:2px;background:linear-gradient(#fafafa,#e6e6e6)"></div>
<div class="t" style="left:831.70px;top:687px;font-size:8.45px;line-height:10px;color:#111;">100%</div>
<svg style="left:0;top:0" width="900" height="705"><path d="M865.6 690.2 L871 690.2 L868.3 693.4 Z" fill="#111"/><path d="M814.2 692.6 L817.6 692.6 M815.9 690.9 L815.9 694.3" stroke="#333" stroke-width="1"/><path d="M886 693.6 L888 693.6" stroke="#333" stroke-width="1"/></svg>
<div class="a" style="left:359.2px;top:235.8px;width:254.8px;height:309.8px;background:#efefef"></div>
<div class="a" style="left:359.2px;top:235.8px;width:254.8px;height:21px;background:#1a6cdf"></div>
<div class="a" style="left:360.8px;top:238.6px;width:14.2px;height:15.6px;background:#e21b23"></div>
<svg style="left:360.8px;top:238.6px" width="15" height="16"><path d="M2.6 3 L11.6 12.8 M11.6 3 L2.6 12.8" stroke="#fff" stroke-width="1.7" fill="none"/></svg>
<div class="t" style="left:381.70px;top:240px;font-size:11.41px;line-height:12px;color:#fff;">Проверка</div>
<div class="a" style="left:596.7px;top:238px;width:13.3px;height:14px;background:#a62039"></div>
<svg style="left:596.7px;top:238px" width="14" height="14"><path d="M3.8 4 L9.8 10.2 M9.8 4 L3.8 10.2" stroke="#e6c3cb" stroke-width="1" fill="none"/></svg>
<div class="gb" style="left:366.4px;top:285.2px;width:239.0px;height:134.2px;"></div>
<div class="gb" style="left:370.6px;top:326.2px;width:226.2px;height:76.8px;background:#f2f2f2"></div>
<div class="gb" style="left:365.6px;top:430.2px;width:239.0px;height:27.4px;"></div>
<div class="a" style="left:371.5px;top:281.8px;width:68.8px;height:9.0px;background:#efefef"></div>
<div class="t" style="left:373.00px;top:281px;font-size:8.78px;line-height:10px;color:#000;transform-origin:0 8px;transform:scale(1,1.060);-webkit-text-stroke:0.15px #000;">Метод проверки</div>
<div class="a" style="left:376.0px;top:322.9px;width:75.2px;height:9.0px;background:#efefef"></div>
<div class="t" style="left:377.50px;top:322px;font-size:8.92px;line-height:10px;color:#000;transform-origin:0 8px;transform:scale(1,1.060);-webkit-text-stroke:0.15px #000;">Режим настройки</div>
<div class="a" style="left:371.0px;top:426.4px;width:42.7px;height:9.0px;background:#efefef"></div>
<div class="t" style="left:372.50px;top:425px;font-size:8.86px;line-height:10px;color:#000;transform-origin:0 8px;transform:scale(1,1.060);-webkit-text-stroke:0.15px #000;">Проверка</div>
<div class="t" style="left:392.50px;top:298px;font-size:8.68px;line-height:10px;color:#000;transform-origin:0 8px;transform:scale(1,1.060);-webkit-text-stroke:0.15px #000;">Авто режим</div>
<div class="t" style="left:517.00px;top:298px;font-size:8.90px;line-height:10px;color:#000;transform-origin:0 8px;transform:scale(1,1.060);-webkit-text-stroke:0.15px #000;">Ручной режим</div>
<div class="t" style="left:392.50px;top:349px;font-size:8.94px;line-height:10px;color:#000;transform-origin:0 8px;transform:scale(1,1.060);-webkit-text-stroke:0.15px #000;">Изменить только наружный блок</div>
<div class="t" style="left:392.50px;top:378px;font-size:8.82px;line-height:10px;color:#000;transform-origin:0 8px;transform:scale(1,1.060);-webkit-text-stroke:0.15px #000;">Изменить наружные и внутренние блоки</div>
<div class="t" style="left:392.00px;top:441px;font-size:8.94px;line-height:10px;color:#000;transform-origin:0 8px;transform:scale(1,1.060);-webkit-text-stroke:0.15px #000;">Подробная проверка</div>
<div class="t" style="left:516.60px;top:441px;font-size:8.88px;line-height:10px;color:#000;transform-origin:0 8px;transform:scale(1,1.060);-webkit-text-stroke:0.15px #000;">Простая проверка</div>
<svg style="left:0;top:0" width="900" height="705"><defs><radialGradient id="rg" cx="0.5" cy="0.5" r="0.6"><stop offset="0" stop-color="#fdfdfd"/><stop offset="0.55" stop-color="#ededed"/><stop offset="1" stop-color="#c6c6c6"/></radialGradient><radialGradient id="rb" cx="0.4" cy="0.35" r="0.7"><stop offset="0" stop-color="#4cc4f6"/><stop offset="0.45" stop-color="#0e5fae"/><stop offset="1" stop-color="#06204d"/></radialGradient></defs>
<circle cx="382.5" cy="302.9" r="4.3" fill="url(#rg)" stroke="#868787" stroke-width="1"/><circle cx="382.5" cy="302.9" r="2.5" fill="url(#rb)"/>
<circle cx="507.5" cy="303.2" r="4.3" fill="url(#rg)" stroke="#868787" stroke-width="1"/>
<circle cx="382.5" cy="353.3" r="4.3" fill="url(#rg)" stroke="#868787" stroke-width="1"/><circle cx="382.5" cy="353.3" r="2.5" fill="url(#rb)"/>
<circle cx="382.5" cy="383.0" r="4.3" fill="url(#rg)" stroke="#868787" stroke-width="1"/>
<circle cx="382.3" cy="445.5" r="4.3" fill="url(#rg)" stroke="#868787" stroke-width="1"/><circle cx="382.3" cy="445.5" r="2.5" fill="url(#rb)"/>
<circle cx="507.0" cy="445.5" r="4.3" fill="url(#rg)" stroke="#868787" stroke-width="1"/>
</svg>
<div class="a" style="left:396.5px;top:472.3px;width:71.5px;height:30.2px;border:1px solid #fafafa;background:#f1f1f1"></div>
<div class="a" style="left:398.7px;top:475.0px;width:67.2px;height:24.8px;border-radius:12.4px;background:#d9d0d4;box-shadow:0 0 1px #cfc8cc"></div>
<div class="a" style="left:400.7px;top:476.8px;width:63.2px;height:21.2px;border-radius:10.6px;background:linear-gradient(180deg,#2e63c6 0%,#1a4db4 45%,#0d3b9f 100%)"></div>
<div class="a" style="left:497.3px;top:475.0px;width:65.4px;height:24.2px;border-radius:12.1px;background:#d9d0d4;box-shadow:0 0 1px #cfc8cc"></div>
<div class="a" style="left:499.3px;top:476.8px;width:61.4px;height:20.6px;border-radius:10.3px;background:linear-gradient(180deg,#2e63c6 0%,#1a4db4 45%,#0d3b9f 100%)"></div>
<div class="t" style="left:425.59px;top:482px;font-size:8.60px;line-height:10px;color:#fff;">OK</div>
<div class="t" style="left:516.34px;top:482px;font-size:8.80px;line-height:10px;color:#fff;">Выход</div>
</body></html>
